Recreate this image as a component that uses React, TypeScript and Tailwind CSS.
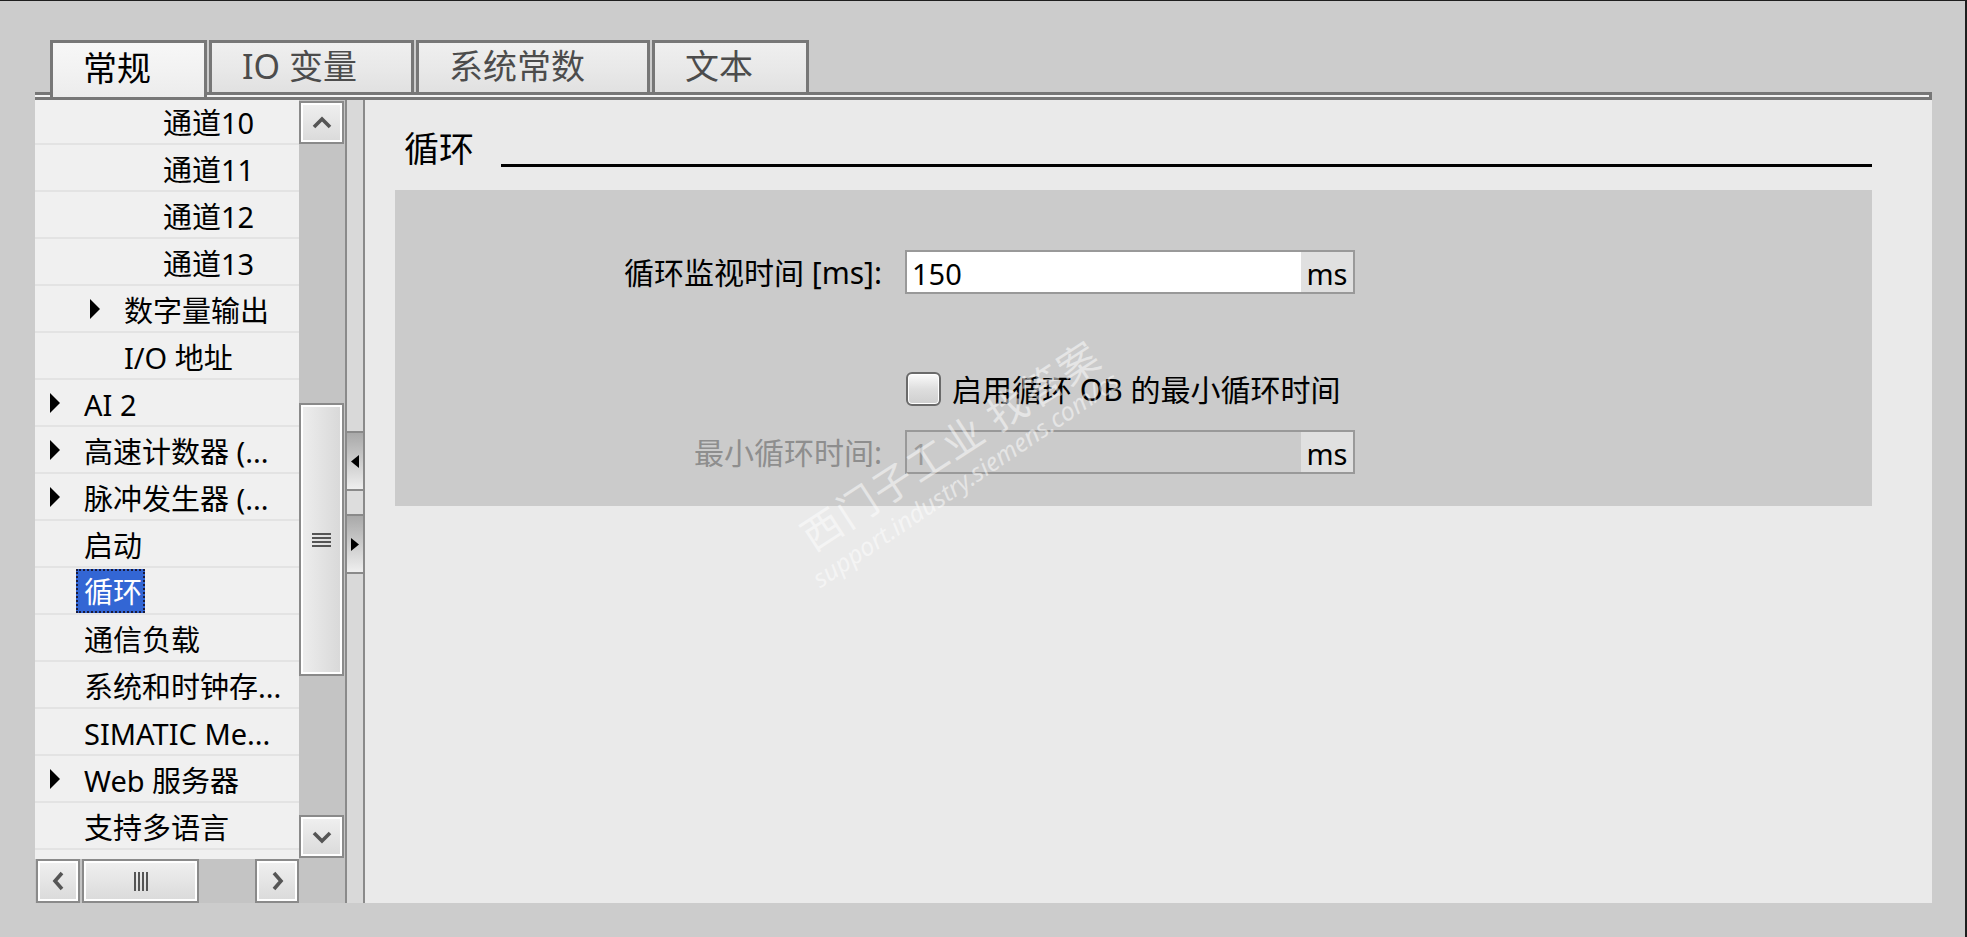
import React from 'react';

type Dir = 'up' | 'down' | 'left' | 'right';

const Chevron = ({ dir }: { dir: Dir }) => {
  const vertical = dir === 'up' || dir === 'down';
  const pts = {
    up: '2,11 10,3 18,11',
    down: '2,3 10,11 18,3',
    left: '10,2 3,10 10,18',
    right: '3,2 10,10 3,18',
  }[dir];
  return (
    <svg width={vertical ? 20 : 13} height={vertical ? 14 : 20} viewBox={vertical ? '0 0 20 14' : '0 0 13 20'}>
      <polyline points={pts} fill="none" stroke="#555555" strokeWidth={3.6} />
    </svg>
  );
};

const Btn = ({ className, children, horiz }: { className: string; children?: React.ReactNode; horiz?: boolean }) => (
  <div className={`box-border border-2 border-[#8a8a8a] bg-white p-[2px] ${className}`}>
    <div
      className={`w-full h-full flex items-center justify-center ${
        horiz ? 'bg-gradient-to-r from-[#ededed] to-[#d9d9d9]' : 'bg-gradient-to-b from-[#efefef] to-[#dbdbdb]'
      }`}
    >
      {children}
    </div>
  </div>
);

const Tri = () => (
  <svg width="10" height="20" viewBox="0 0 10 20">
    <polygon points="0,0 10,10 0,20" fill="#000" />
  </svg>
);

type Row = { lvl: 0 | 1 | 2; text: string; tri?: boolean; sel?: boolean };

const rows: Row[] = [
  { lvl: 2, text: '通道10' },
  { lvl: 2, text: '通道11' },
  { lvl: 2, text: '通道12' },
  { lvl: 2, text: '通道13' },
  { lvl: 1, text: '数字量输出', tri: true },
  { lvl: 1, text: 'I/O 地址' },
  { lvl: 0, text: 'AI 2', tri: true },
  { lvl: 0, text: '高速计数器 (...', tri: true },
  { lvl: 0, text: '脉冲发生器 (...', tri: true },
  { lvl: 0, text: '启动' },
  { lvl: 0, text: '循环', sel: true },
  { lvl: 0, text: '通信负载' },
  { lvl: 0, text: '系统和时钟存...' },
  { lvl: 0, text: 'SIMATIC Me...' },
  { lvl: 0, text: 'Web 服务器', tri: true },
  { lvl: 0, text: '支持多语言' },
];

const lvlPad = ['pl-[15px]', 'pl-[55px]', 'pl-[94px]'];

const tabs = [
  { label: '常规', w: 'w-[157px]', active: true },
  { label: 'IO 变量', w: 'w-[205px]' },
  { label: '系统常数', w: 'w-[234px]' },
  { label: '文本', w: 'w-[157px]' },
];

export default function App() {
  return (
    <div className="relative w-[1967px] h-[937px] overflow-hidden bg-[#cccccc] border-t border-r-2 border-[#1e1e1e] font-['Noto_Sans','Noto_Sans_CJK_SC',sans-serif] text-black">
      <div className="pt-[39px] pl-[35px] pr-[33px]">
        {/* tabs */}
        <div className="flex gap-[2px] pl-[15px] h-[52px] relative z-10">
          {tabs.map((t) => (
            <div
              key={t.label}
              className={`${t.w} box-border border-t-[3px] border-x-[3px] border-[#777777] flex items-center pl-[30px] pb-[4px] text-[34px] leading-none whitespace-nowrap ${
                t.active
                  ? 'h-[57px] bg-gradient-to-b from-[#f7f7f7] via-[#f2f2f2] to-[#ececec] text-black'
                  : 'h-[52px] bg-gradient-to-b from-[#efefef] via-[#e9e9e9] to-[#e1e1e1] text-[#4c4c4c]'
              }`}
            >
              {t.label}
            </div>
          ))}
        </div>
        {/* panel top bar */}
        <div className="h-[8px] box-border border-t-[3px] border-b-[3px] border-r-[3px] border-[#777777] bg-[#f4f4f4]" />
        {/* panel body */}
        <div className="flex h-[803px]">
          {/* left column */}
          <div className="w-[310px] flex flex-col">
            <div className="flex h-[759px]">
              {/* tree */}
              <div className="w-[264px] bg-[#f0f0f0] overflow-hidden">
                <div className="-mt-[2px]">
                  {rows.map((r, i) => (
                    <div
                      key={i}
                      className={`h-[47px] box-border border-b-2 border-[#e3e3e3] flex items-center ${lvlPad[r.lvl]} text-[29px] leading-none whitespace-nowrap`}
                    >
                      <div className="w-[34px] flex items-center">{r.tri ? <Tri /> : null}</div>
                      {r.sel ? (
                        <div className="-ml-[8px] h-[44px] pl-[6px] pr-[1px] box-border border-2 border-dotted border-[#1b1b3a] bg-[#3366d4] text-white flex items-center pt-[2px]">
                          {r.text}
                        </div>
                      ) : (
                        <span className="pt-[3px]">{r.text}</span>
                      )}
                    </div>
                  ))}
                </div>
              </div>
              {/* vertical scrollbar */}
              <div className="w-[46px] bg-[#c4c4c4] flex flex-col">
                <div className="h-[1px]" />
                <Btn className="w-[45px] h-[43px]">
                  <Chevron dir="up" />
                </Btn>
                <div className="h-[259px]" />
                <Btn className="w-[45px] h-[273px]" horiz>
                  <div className="flex flex-col gap-[2px]">
                    <div className="w-[19px] h-[2px] bg-[#555]" />
                    <div className="w-[19px] h-[2px] bg-[#555]" />
                    <div className="w-[19px] h-[2px] bg-[#555]" />
                    <div className="w-[19px] h-[2px] bg-[#555]" />
                  </div>
                </Btn>
                <div className="h-[139px]" />
                <Btn className="w-[45px] h-[43px]">
                  <Chevron dir="down" />
                </Btn>
              </div>
            </div>
            {/* horizontal scrollbar */}
            <div className="h-[44px] bg-[#c4c4c4] flex items-stretch">
              <Btn className="ml-[1px] w-[44px] h-[44px]">
                <Chevron dir="left" />
              </Btn>
              <Btn className="ml-[2px] w-[117px] h-[44px]">
                <div className="flex gap-[2px]">
                  <div className="w-[2px] h-[19px] bg-[#555]" />
                  <div className="w-[2px] h-[19px] bg-[#555]" />
                  <div className="w-[2px] h-[19px] bg-[#555]" />
                  <div className="w-[2px] h-[19px] bg-[#555]" />
                </div>
              </Btn>
              <div className="w-[56px]" />
              <Btn className="w-[44px] h-[44px]">
                <Chevron dir="right" />
              </Btn>
            </div>
          </div>
          {/* splitter */}
          <div className="w-[20px] box-border border-l-2 border-r-2 border-[#8a8a8a] bg-[#d9d9d9] flex flex-col">
            <div className="h-[331px]" />
            <div className="h-[2px] bg-[#8a8a8a]" />
            <div className="h-[56px] bg-gradient-to-b from-[#a9a9a9] to-[#efefef] flex items-center justify-center">
              <svg width="8" height="13" viewBox="0 0 8 13">
                <polygon points="8,0 0,6.5 8,13" fill="#000" />
              </svg>
            </div>
            <div className="h-[2px] bg-[#8a8a8a]" />
            <div className="h-[23px] bg-[#dddddd]" />
            <div className="h-[2px] bg-[#8a8a8a]" />
            <div className="h-[56px] bg-gradient-to-b from-[#a9a9a9] to-[#efefef] flex items-center justify-center">
              <svg width="8" height="13" viewBox="0 0 8 13">
                <polygon points="0,0 8,6.5 0,13" fill="#000" />
              </svg>
            </div>
            <div className="h-[2px] bg-[#8a8a8a]" />
            <div className="flex-1" />
          </div>
          {/* right content */}
          <div className="flex-1 bg-[#eaeaea] pt-[31px]">
            <div className="flex items-end pl-[39px] pr-[60px]">
              <div className="text-[35px] leading-none whitespace-nowrap">循环</div>
              <div className="flex-1 ml-[27px] h-[3px] bg-black -mb-[1px]" />
            </div>
            <div className="mt-[24px] ml-[30px] mr-[60px] h-[316px] bg-[#cbcbcb] pt-[60px] text-[30px] leading-none">
              {/* row 1 */}
              <div className="flex items-center h-[44px]">
                <div className="w-[487px] text-right whitespace-nowrap pt-[2px]">循环监视时间 [ms]:</div>
                <div className="ml-[23px] w-[450px] h-[44px] box-border border-2 border-[#999999] bg-white flex">
                  <div className="flex-1 flex items-center pl-[5px] pt-[2px] text-[29px]">150</div>
                  <div className="w-[52px] bg-[#e0e0e0] flex items-center justify-center text-[29px] pt-[2px]">ms</div>
                </div>
              </div>
              {/* row 2 */}
              <div className="flex items-center h-[34px] mt-[78px] pl-[511px]">
                <div className="w-[35px] h-[34px] box-border rounded-[6px] border-2 border-[#6a6a6a] bg-gradient-to-b from-[#fbfbfb] via-[#dedede] to-[#cfcfcf] shadow-[inset_0_0_0_1px_#ffffff]" />
                <div className="ml-[11px] whitespace-nowrap pt-[2px]">启用循环 OB 的最小循环时间</div>
              </div>
              {/* row 3 */}
              <div className="flex items-center h-[44px] mt-[24px]">
                <div className="w-[487px] text-right whitespace-nowrap text-[#8e8e8e] pt-[2px]">最小循环时间:</div>
                <div className="ml-[23px] w-[450px] h-[44px] box-border border-2 border-[#999999] bg-[#cbcbcb] flex">
                  <div className="flex-1 flex items-center pl-[5px] pt-[2px] text-[29px] text-[#9a9a9a]">1</div>
                  <div className="w-[52px] bg-[#e0e0e0] flex items-center justify-center text-[29px] pt-[2px]">ms</div>
                </div>
              </div>
            </div>
          </div>
        </div>
      </div>
      {/* watermark */}
      <div className="absolute left-[815px] top-[514px] origin-[0_100%] -rotate-[33deg] text-[40px] leading-none whitespace-nowrap text-white/50 pointer-events-none font-['Noto_Sans_CJK_SC',sans-serif] tracking-[2px]">
        西门子工业 找答案
      </div>
      <div className="absolute left-[822px] top-[565px] origin-[0_100%] -rotate-[34deg] text-[25px] leading-none whitespace-nowrap text-white/50 pointer-events-none italic">
        support.industry.siemens.com/cs
      </div>
    </div>
  );
}
